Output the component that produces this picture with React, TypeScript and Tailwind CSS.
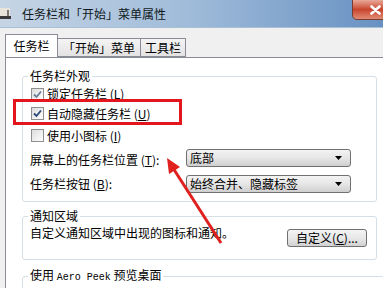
import type { ReactNode } from 'react'

const font = { fontFamily: '"Noto Sans CJK SC", "Noto Sans", sans-serif' }

function Key({ k }: { k: string }) {
  return (
    <span>
      (<span className="underline">{k}</span>)
    </span>
  )
}

function CheckBox({ checked, dim }: { checked?: boolean; dim?: boolean }) {
  return (
    <div className="w-[13px] h-[13px] border border-[#8e8f8f] bg-gradient-to-br from-[#dcdcdc] to-[#ffffff] flex items-center justify-center shrink-0">
      {checked && (
        <svg width="9" height="9" viewBox="0 0 9 9">
          <path
            d="M1 4.5 L3.5 7 L8 1.5"
            fill="none"
            stroke={dim ? '#6b7f99' : '#2a4a7a'}
            strokeWidth="1.8"
          />
        </svg>
      )}
    </div>
  )
}

function CheckRow({ children, checked, dim, className }: { children: ReactNode; checked?: boolean; dim?: boolean; className?: string }) {
  return (
    <div className={`flex items-center gap-[3px] h-[19px] ml-[1px] ${className ?? ''}`}>
      <CheckBox checked={checked} dim={dim} />
      <span>{children}</span>
    </div>
  )
}

function Select({ value }: { value: string }) {
  return (
    <div className="w-[165px] h-[18px] border border-[#707070] rounded-[3px] bg-gradient-to-b from-[#f3f3f3] via-[#e6e6e6] to-[#cfcfcf] flex items-center justify-between pl-[3px] pr-[8px]">
      <span className="leading-[16px]">{value}</span>
      <svg width="7" height="4" viewBox="0 0 7 4">
        <polygon points="0,0 7,0 3.5,4" fill="#000" />
      </svg>
    </div>
  )
}

function Group({ label, children, className }: { label: ReactNode; children: ReactNode; className?: string }) {
  return (
    <fieldset className={`w-[355px] border border-[#d5dfe5] rounded-[3px] pl-[7px] pr-[9px] ${className ?? ''}`}>
      <legend className="ml-[-2px] px-[2px] leading-[16px]">{label}</legend>
      {children}
    </fieldset>
  )
}

export default function App() {
  return (
    <div className="w-[383px] h-[288px] overflow-hidden bg-[#f0f0f0] relative text-[12px] text-black" style={font}>
      {/* title bar */}
      <div className="h-[28px] bg-gradient-to-r from-[#c6d5e5] via-[#9fbbd9] to-[#6891c2] flex items-start relative border-b border-[#a9bfd6]">
        <svg width="14" height="14" viewBox="0 0 14 14" className="mt-[7px] ml-[-1px]">
          <rect x="0" y="1" width="11" height="11" fill="#e8e4da" />
          <rect x="0" y="9" width="12" height="3" fill="#3a3a3a" />
          <rect x="8" y="3" width="2" height="6" fill="#7a7a7a" />
        </svg>
        <span className="ml-[9px] mt-[6px] leading-[16px] text-[#101820]">任务栏和「开始」菜单属性</span>
        <div className="absolute left-[352px] top-0 w-[40px] h-[20px] rounded-bl-[5px] border border-t-0 border-[#7a3b30] bg-gradient-to-b from-[#e8a898] via-[#c8442d] to-[#e08a74] flex items-center pl-[17px]">
          <svg width="11" height="10" viewBox="0 0 11 10">
            <path d="M1.5 1.5 L9.5 8.5 M9.5 1.5 L1.5 8.5" stroke="#fff" strokeWidth="2.6" strokeLinecap="round" />
          </svg>
        </div>
      </div>

      {/* tabs */}
      <div className="flex items-end pl-[5px] mt-[7px] h-[22px] relative z-10">
        <div className="h-[23px] w-[53px] bg-white border border-b-0 border-[#898c95] flex items-center justify-center whitespace-nowrap leading-[16px]">
          任务栏
        </div>
        <div className="h-[19px] w-[83px] bg-gradient-to-b from-[#f4f4f4] to-[#e3e3e3] border border-l-0 border-[#898c95] flex items-center justify-center whitespace-nowrap leading-[16px]">
          「开始」菜单
        </div>
        <div className="h-[19px] w-[45px] bg-gradient-to-b from-[#f4f4f4] to-[#e3e3e3] border border-l-0 border-[#898c95] flex items-center justify-center whitespace-nowrap leading-[16px]">
          工具栏
        </div>
      </div>

      {/* panel */}
      <div className="ml-[5px] border-l border-t border-[#898c95] bg-white h-[300px] pl-[16px] pt-[10px]">
        <Group label="任务栏外观">
          <CheckRow checked dim className="h-[20px]">
            锁定任务栏 <Key k="L" />
          </CheckRow>
          <CheckRow checked>
            自动隐藏任务栏 <Key k="U" />
          </CheckRow>
          <CheckRow className="mt-[3px]">
            使用小图标 <Key k="I" />
          </CheckRow>
          <div className="flex items-center h-[20px] mt-[3px]">
            <span className="w-[156px] pt-[3px]">
              屏幕上的任务栏位置 <Key k="T" />:
            </span>
            <Select value="底部" />
          </div>
          <div className="flex items-center h-[20px] mt-[6px] mb-[7px]">
            <span className="w-[156px]">
              任务栏按钮 <Key k="B" />:
            </span>
            <Select value="始终合并、隐藏标签" />
          </div>
        </Group>

        <Group label="通知区域" className="mt-[6px]">
          <div className="flex items-start justify-between pb-[12px]">
            <span className="leading-[16px] mt-[1px]">自定义通知区域中出现的图标和通知。</span>
            <div className="mt-[5px] w-[80px] h-[18px] border border-[#707070] rounded-[3px] bg-gradient-to-b from-[#f3f3f3] via-[#e8e8e8] to-[#d2d2d2] flex items-center justify-center leading-[16px]">
              自定义 <Key k="C" />...
            </div>
          </div>
        </Group>

        <Group
          label={
            <span>
              使用 <span className="text-[10px]" style={{ fontFamily: '"Liberation Mono", monospace' }}>Aero Peek</span> 预览桌面
            </span>
          }
          className="mt-[7px]"
        >
          <div className="leading-[16px] whitespace-nowrap">
            当您将鼠标移动到任务栏末端的“显示桌面”按钮时，会暂时查看桌面。
          </div>
        </Group>
      </div>

      {/* red highlight box */}
      <div className="absolute left-[13px] top-[99px] w-[169px] h-[26px] border-[3px] border-[#e3161d]" />

      {/* red arrow */}
      <svg className="absolute left-0 top-0 pointer-events-none" width="383" height="288" viewBox="0 0 383 288">
        <line x1="221" y1="243" x2="173" y2="168" stroke="#e0201e" strokeWidth="3" />
        <polygon points="167,158 180,167 169,174" fill="#e0201e" />
      </svg>
    </div>
  )
}
